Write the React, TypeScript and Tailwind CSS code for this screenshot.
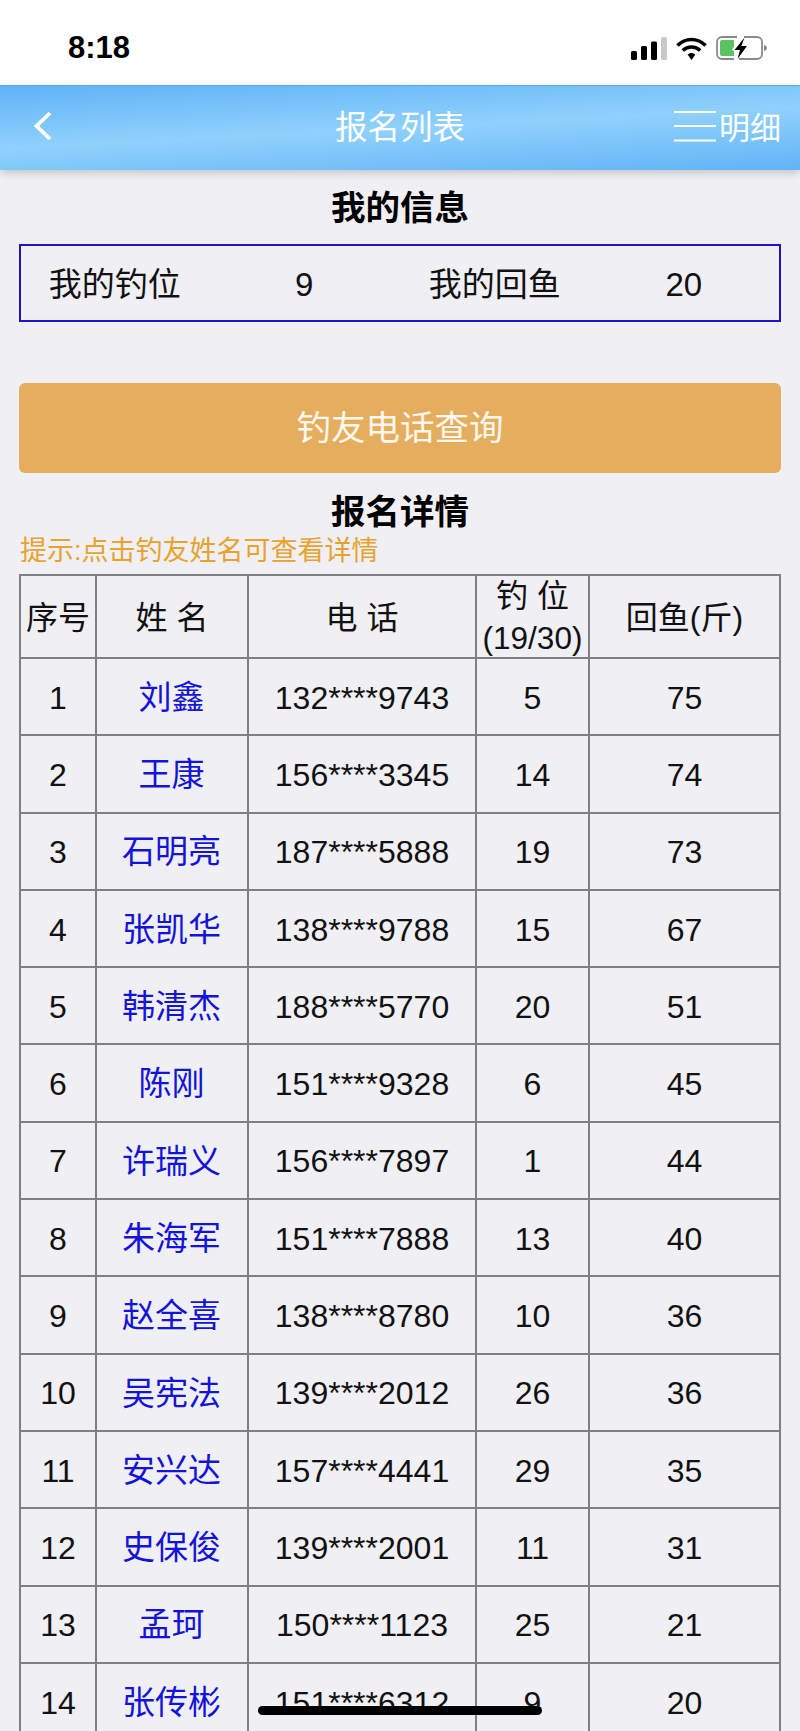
const rows: [string, string, string, string, string][] = [
  ["1", "刘鑫", "132****9743", "5", "75"],
  ["2", "王康", "156****3345", "14", "74"],
  ["3", "石明亮", "187****5888", "19", "73"],
  ["4", "张凯华", "138****9788", "15", "67"],
  ["5", "韩清杰", "188****5770", "20", "51"],
  ["6", "陈刚", "151****9328", "6", "45"],
  ["7", "许瑞义", "156****7897", "1", "44"],
  ["8", "朱海军", "151****7888", "13", "40"],
  ["9", "赵全喜", "138****8780", "10", "36"],
  ["10", "吴宪法", "139****2012", "26", "36"],
  ["11", "安兴达", "157****4441", "29", "35"],
  ["12", "史保俊", "139****2001", "11", "31"],
  ["13", "孟珂", "150****1123", "25", "21"],
  ["14", "张传彬", "151****6312", "9", "20"],
];

const cell = "border-2 border-[#808080] px-0 pb-0 pt-[2px] text-center align-middle";

export default function App() {
  return (
    <div className="relative h-[1731px] w-[800px] overflow-hidden bg-[#efeff4] font-['Liberation_Sans','Noto_Sans_CJK_SC',sans-serif] text-[32px] text-[#111]">
      {/* status bar */}
      <div className="flex h-[85px] items-center justify-between bg-white pl-[68px] pr-[33px]">
        <span className="pt-[10px] text-[31px] font-bold leading-none text-black">8:18</span>
        <div className="flex items-center gap-[9px] pt-[11px]">
          <svg width="36" height="23" viewBox="0 0 36 23">
            <rect x="0" y="14" width="6" height="9" rx="1.5" fill="#000" />
            <rect x="10" y="9" width="6" height="14" rx="1.5" fill="#000" />
            <rect x="20" y="4.5" width="6" height="18.5" rx="1.5" fill="#000" />
            <rect x="30" y="0" width="6" height="23" rx="1.5" fill="#c8c8c8" />
          </svg>
          <svg width="31" height="23" viewBox="0 0 31 23" fill="none" stroke="#000" strokeWidth="3.6">
            <path d="M1.5 8.5 C9.5 0.5 21.5 0.5 29.5 8.5" />
            <path d="M6.8 13.5 C11.8 8.8 19.2 8.8 24.2 13.5" />
            <path d="M11.6 17.6 L15.5 23 L19.4 17.6 C17.2 15.4 13.8 15.4 11.6 17.6 Z" fill="#000" stroke="none" />
          </svg>
          <svg width="51" height="24" viewBox="0 0 51 24" fill="none">
            <path d="M21 1H6a5 5 0 0 0-5 5v12a5 5 0 0 0 5 5h12" stroke="#8a8a8a" strokeWidth="1.8" />
            <path d="M28 1h13a5 5 0 0 1 5 5v12a5 5 0 0 1-5 5H23" stroke="#8a8a8a" strokeWidth="1.8" />
            <path d="M48 9c1.8.5 3 1.6 3 3s-1.2 2.5-3 3z" fill="#8a8a8a" />
            <path d="M6 4h12v6.5l-2 3.5 2 1v5H6a2 2 0 0 1-2-2V6a2 2 0 0 1 2-2z" fill="#5ac35f" />
            <path d="M28.5 1.5L18.5 14h5.5l-2.5 9 9.5-13h-5.5z" fill="#000" />
          </svg>
        </div>
      </div>

      {/* nav bar */}
      <div className="relative z-10 flex h-[85px] items-center border-t border-[#5fa6e2] bg-[linear-gradient(177deg,#5fb3f6_0%,#90d1fc_50%,#61b4f6_100%)] text-white shadow-[0_3px_8px_rgba(0,0,0,0.18)]">
        <div className="w-[150px] pl-[33px]">
          <svg width="20" height="30" viewBox="0 0 20 30" fill="none" stroke="#fff" strokeWidth="3.8" className="-mt-[5px] block">
            <path d="M17 2 L3.5 15 L17 28" />
          </svg>
        </div>
        <div className="flex-1 text-center text-[32.5px] leading-none">报名列表</div>
        <div className="flex w-[150px] items-center justify-end pr-[19px]">
          <svg width="42" height="32" viewBox="0 0 42 32" stroke="#fff" strokeWidth="2.2" className="-mt-[5px] block">
            <path d="M0 2 H42 M0 16 H42 M0 30.5 H42" />
          </svg>
          <span className="ml-[3px] text-[31px] leading-none">明细</span>
        </div>
      </div>

      <div className="flex h-[74px] items-center justify-center pt-[3px] text-[34.5px] font-bold leading-none text-black">我的信息</div>

      <div className="mx-[19px] grid h-[78px] grid-cols-4 items-center border-2 border-[#2211cc] pt-[3px] text-center text-[33px]">
        <span className="pr-[2px]">我的钓位</span>
        <span className="pr-[2px]">9</span>
        <span>我的回鱼</span>
        <span className="pr-[1px]">20</span>
      </div>

      <button className="mx-[19px] mt-[61px] block h-[90px] w-[762px] rounded-[6px] bg-[#e5ae5e] pt-[1px] text-[34.5px] text-white/90">钓友电话查询</button>

      <div className="flex h-[76px] items-center justify-center pt-[2px] text-[34.5px] font-bold leading-none text-black">报名详情</div>

      <div className="-mt-[12px] ml-[20px] h-[28px] text-[27px] leading-[28px] text-[#e8a22e]">提示:点击钓友姓名可查看详情</div>

      <table className="ml-[19px] mt-[9px] w-[760px] table-fixed border-collapse">
        <colgroup>
          <col className="w-[76px]" />
          <col className="w-[152px]" />
          <col className="w-[228px]" />
          <col className="w-[113px]" />
          <col className="w-[191px]" />
        </colgroup>
        <thead>
          <tr className="h-[83px]">
            <th className={`${cell} font-normal`}>序号</th>
            <th className={`${cell} font-normal`}>姓 名</th>
            <th className={`${cell} font-normal`}>电 话</th>
            <th className={`${cell} font-normal`}>
              <div className="-mb-[3px] -mt-[4px] leading-[42px]">
                <div>钓 位</div>
                <div className="whitespace-nowrap text-[31.5px]">(19/30)</div>
              </div>
            </th>
            <th className={`${cell} font-normal`}>回鱼(斤)</th>
          </tr>
        </thead>
        <tbody>
          {rows.map((r) => (
            <tr key={r[0]} className="h-[77.3px]">
              <td className={cell}>{r[0]}</td>
              <td className={`${cell} pr-[1px] text-[33px] text-[#1414d8]`}>{r[1]}</td>
              <td className={cell}>{r[2]}</td>
              <td className={cell}>{r[3]}</td>
              <td className={cell}>{r[4]}</td>
            </tr>
          ))}
        </tbody>
      </table>

      {/* home indicator */}
      <div className="absolute left-[258px] top-[1706px] h-[9px] w-[284px] rounded-full bg-black" />
    </div>
  );
}
